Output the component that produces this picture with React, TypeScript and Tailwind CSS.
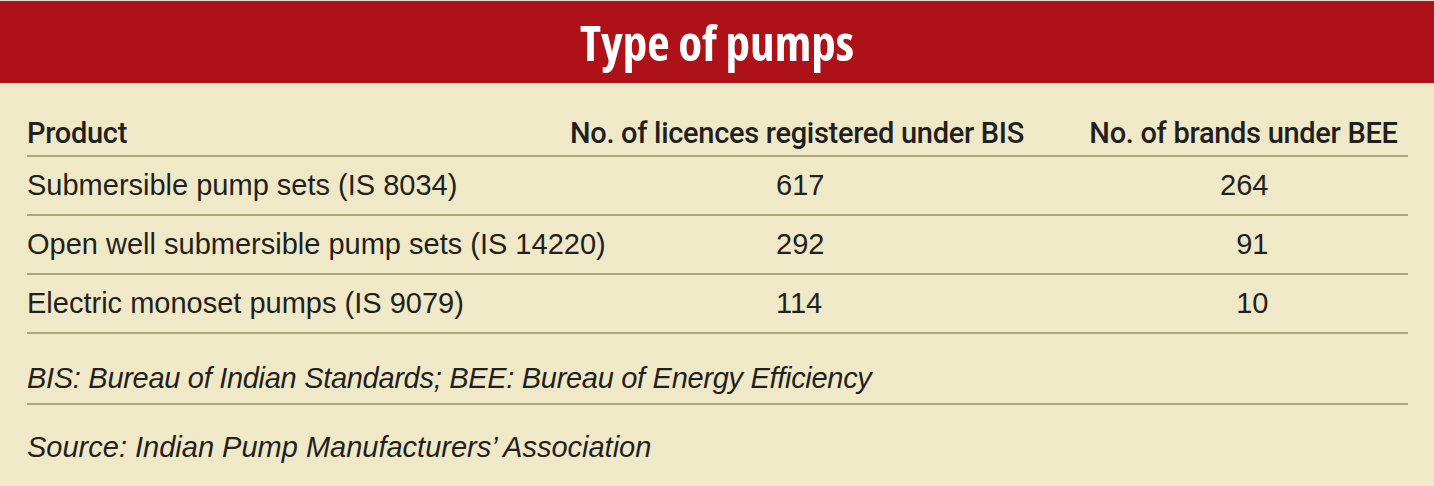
import React from "react";

const rows = [
  { product: "Submersible pump sets (IS 8034)", bis: "617", bee: "264" },
  { product: "Open well submersible pump sets (IS 14220)", bis: "292", bee: "91" },
  { product: "Electric monoset pumps (IS 9079)", bis: "114", bee: "10" },
];

export default function App() {
  return (
    <div className="w-[1434px] h-[486px] bg-[#efe9c8] border-t border-[#e4d9d3] overflow-hidden font-['Liberation_Sans',sans-serif] text-[#231f20]">
      <div className="h-[82px] bg-[#ae1118] flex items-center justify-center">
        <h1 className="font-['Open_Sans',sans-serif] font-bold font-stretch-condensed text-[49px] leading-none text-white">
          Type of pumps
        </h1>
      </div>
      <div className="ml-[27px] mr-[26px]">
        <div className="flex items-center pt-[36px] pb-[7px] border-b-2 border-[#aca67c] font-['Roboto',sans-serif] font-medium text-[29px] tracking-[-0.3px] leading-[29px] whitespace-nowrap">
          <div className="w-[543px]">Product</div>
          <div className="w-[454px] text-center">No. of licences registered under BIS</div>
          <div className="w-[63px]" />
          <div className="w-[313px] text-center">No. of brands under BEE</div>
        </div>
        {rows.map((r) => (
          <div
            key={r.product}
            className="flex items-center py-[14px] border-b-2 border-[#aca67c] text-[29px] leading-[29px] whitespace-nowrap"
          >
            <div className="w-[543px]">{r.product}</div>
            <div className="w-[454px] flex justify-center">
              <span className="w-[50px] text-right pl-[4px]">{r.bis}</span>
            </div>
            <div className="w-[63px]" />
            <div className="w-[313px] flex justify-center">
              <span className="w-[50px] text-right">{r.bee}</span>
            </div>
          </div>
        ))}
        <div className="pt-[30px] pb-[10px] border-b-2 border-[#aca67c] text-[29px] tracking-[-0.3px] leading-[29px] italic whitespace-nowrap">
          BIS: Bureau of Indian Standards; BEE: Bureau of Energy Efficiency
        </div>
        <div className="pt-[28px] text-[29px] leading-[29px] italic whitespace-nowrap">
          Source: Indian Pump Manufacturers’ Association
        </div>
      </div>
    </div>
  );
}
